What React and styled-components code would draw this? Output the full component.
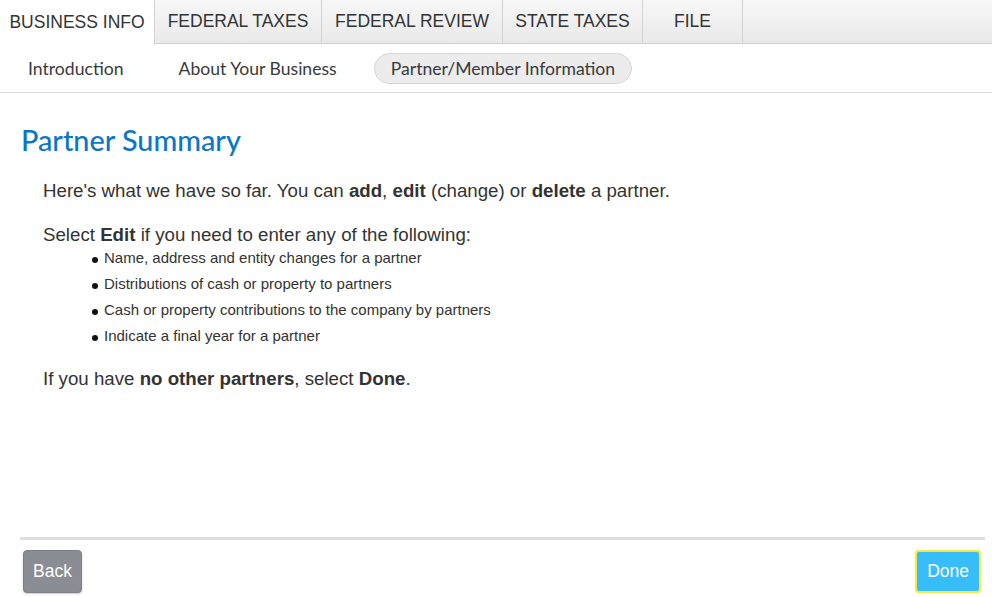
import React from "react";
import styled, { createGlobalStyle } from "styled-components";

const Global = createGlobalStyle`
  html, body {
    margin: 0;
    padding: 0;
    background: #fff;
  }
  body {
    font-family: "Liberation Sans", Arial, sans-serif;
    color: #333;
  }
`;

const Page = styled.div`
  width: 992px;
  height: 597px;
  display: flex;
  flex-direction: column;
  overflow: hidden;
`;

const TabBar = styled.div`
  display: flex;
  height: 44px;
  background: linear-gradient(#f7f7f7, #e9e9e9);
  border-bottom: 1px solid #cfcfcf;
  box-sizing: border-box;
`;

const Tab = styled.div`
  width: ${(p) => p.w}px;
  display: flex;
  align-items: center;
  justify-content: center;
  font-size: 17.5px;
  color: #333;
  border-right: 1px solid #d4d4d4;
  box-sizing: border-box;
  background: ${(p) => (p.active ? "#fff" : "transparent")};
  height: ${(p) => (p.active ? "45px" : "100%")};
`;

const SubNav = styled.div`
  display: flex;
  align-items: center;
  height: 48px;
  padding-left: 11px;
  border-bottom: 1px solid #d8d8d8;
  font-family: Lato, "Open Sans", sans-serif;
`;

const SubItem = styled.div`
  font-size: 17.6px;
  color: #393a3d;
  padding: 4px 16px 4px;
  margin-right: 21px;
  border-radius: 16px;
  background: ${(p) => (p.active ? "#ececec" : "transparent")};
  border: 1px solid ${(p) => (p.active ? "#d6d6d6" : "transparent")};
  margin-left: ${(p) => (p.active ? -1 : 0)}px;
`;

const Main = styled.div`
  flex: 1;
  padding: 30px 0 0 21px;
`;

const Title = styled.h1`
  margin: 0 0 22px;
  font-family: Lato, "Open Sans", sans-serif;
  font-weight: 500;
  font-size: 28.8px;
  color: #0a77c6;
`;

const Body = styled.div`
  padding-left: 22px;
  font-size: 18.7px;
  color: #333;
`;

const Para = styled.p`
  margin: 0 0 ${(p) => p.mb || 0}px;
  line-height: 24px;
`;

const List = styled.ul`
  list-style: none;
  margin: -2px 0 18px;
  padding: 0 0 0 49px;
`;

const Item = styled.li`
  font-size: 15px;
  line-height: 26px;
  display: flex;
  align-items: center;
  &::before {
    content: "";
    width: 6px;
    height: 6px;
    border-radius: 50%;
    background: #111;
    margin: 3px 6px 0 0;
  }
`;

const Footer = styled.div`
  margin: 0 7px 0 20px;
  border-top: 3px solid #dedede;
  padding: 10px 0 4px 3px;
  display: flex;
  justify-content: space-between;
`;

const Button = styled.button`
  font-family: "Liberation Sans", Arial, sans-serif;
  font-size: 17.5px;
  color: #fff;
  height: 43px;
  padding: 0 ${(p) => (p.primary ? 10 : 9)}px;
  border-radius: 4px;
  border: ${(p) => (p.primary ? "2px solid #f5e94a" : "1px solid #7c7f85")};
  background: ${(p) => (p.primary ? "#36bdfa" : "#8a8d93")};
  box-shadow: ${(p) => (p.primary ? "0 0 2px #fff36b" : "0 1px 2px rgba(0,0,0,0.2)")};
  margin-right: ${(p) => (p.primary ? 4 : 0)}px;
`;

const tabs = [
  ["BUSINESS INFO", 155],
  ["FEDERAL TAXES", 167],
  ["FEDERAL REVIEW", 181],
  ["STATE TAXES", 140],
  ["FILE", 100],
];

const bullets = [
  "Name, address and entity changes for a partner",
  "Distributions of cash or property to partners",
  "Cash or property contributions to the company by partners",
  "Indicate a final year for a partner",
];

export default function App() {
  return (
    <Page>
      <Global />
      <TabBar>
        {tabs.map(([t, w], i) => (
          <Tab key={t} w={w} active={i === 0}>
            {t}
          </Tab>
        ))}
      </TabBar>
      <SubNav>
        <SubItem>Introduction</SubItem>
        <SubItem>About Your Business</SubItem>
        <SubItem active>Partner/Member Information</SubItem>
      </SubNav>
      <Main>
        <Title>Partner Summary</Title>
        <Body>
          <Para mb={20}>
            Here's what we have so far. You can <b>add</b>, <b>edit</b> (change) or <b>delete</b> a partner.
          </Para>
          <Para>
            Select <b>Edit</b> if you need to enter any of the following:
          </Para>
          <List>
            {bullets.map((b) => (
              <Item key={b}>{b}</Item>
            ))}
          </List>
          <Para>
            If you have <b>no other partners</b>, select <b>Done</b>.
          </Para>
        </Body>
      </Main>
      <Footer>
        <Button>Back</Button>
        <Button primary>Done</Button>
      </Footer>
    </Page>
  );
}
